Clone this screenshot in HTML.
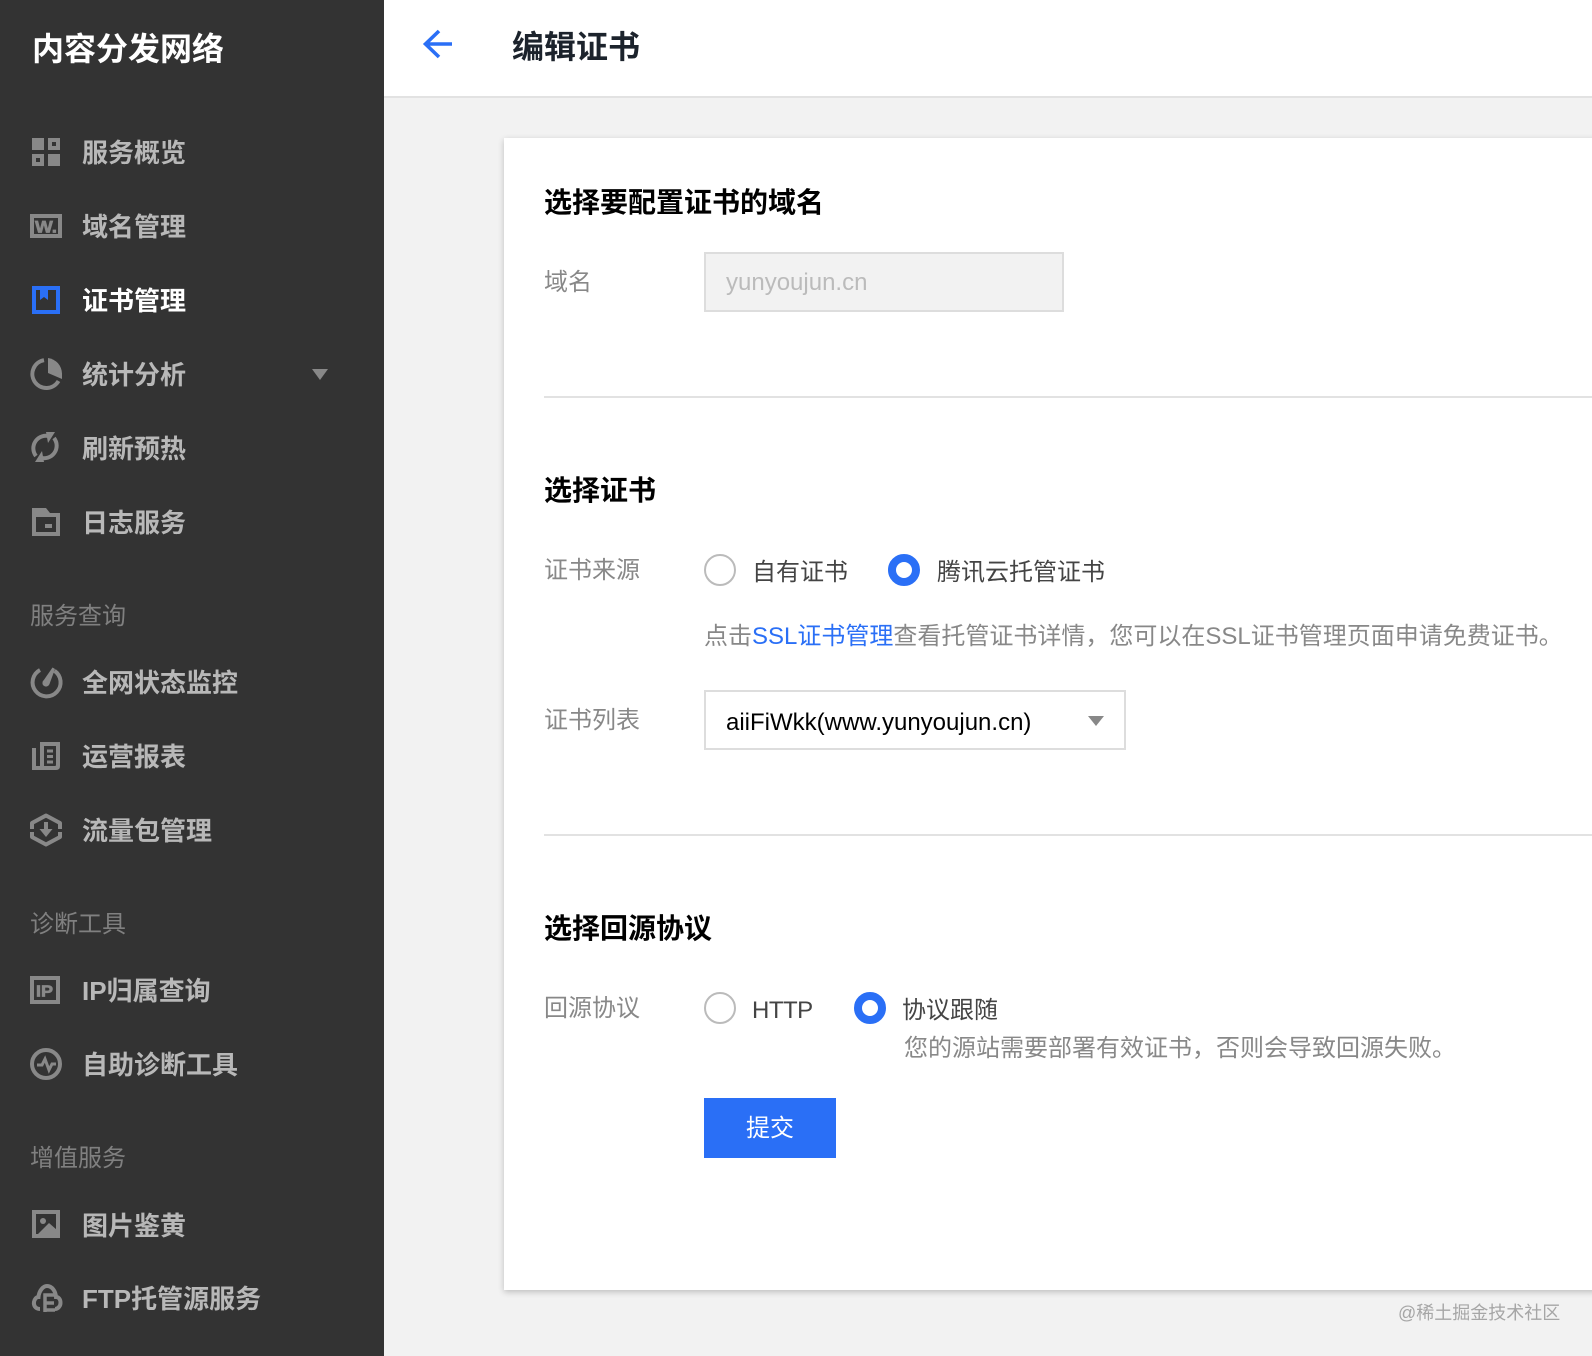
<!DOCTYPE html>
<html lang="zh-CN">
<head>
<meta charset="utf-8">
<title>编辑证书</title>
<style>
html,body{margin:0;padding:0;width:1592px;height:1356px;overflow:hidden;background:#f2f2f2}
body{position:relative;font-family:"Liberation Sans","Noto Sans CJK SC",sans-serif}
.t{position:absolute;white-space:nowrap;line-height:40px;height:40px}
.side{position:absolute;left:0;top:0;width:384px;height:1356px;background:#333}
.head{position:absolute;left:384px;top:0;width:1208px;height:96px;background:#fff;border-bottom:2px solid #e2e2e2}
.card{position:absolute;left:504px;top:138px;width:1200px;height:1152px;background:#fff;box-shadow:0 2px 6px rgba(0,0,0,.22)}
.m{left:82px;font-size:26px;font-weight:700;color:#b8b8b8}
.g{left:30px;font-size:24px;color:#808080}
.h2{left:544px;font-size:28px;font-weight:700;color:#000}
.l{left:544px;font-size:24px;color:#888}
.v{font-size:24px;color:#444}
.hint{font-size:24px;color:#888}
.div{position:absolute;left:544px;width:1048px;height:2px;background:#e2e2e2}
.radio{position:absolute;width:32px;height:32px;border-radius:50%;box-sizing:border-box;background:#fff;border:2px solid #bbb}
.radio.on{border:8px solid #2a6ff6}
.box{position:absolute;box-sizing:border-box;border:2px solid #ddd}
svg{position:absolute;left:0;top:0}
</style>
</head>
<body>
<div class="side"></div>
<div class="head"></div>
<div class="card"></div>

<div class="t" style="left:32px;top:29px;font-size:32px;font-weight:700;color:#fff">内容分发网络</div>
<div class="t m" style="top:133px">服务概览</div>
<div class="t m" style="top:207px">域名管理</div>
<div class="t m" style="top:281px;color:#fff">证书管理</div>
<div class="t m" style="top:355px">统计分析</div>
<div class="t m" style="top:429px">刷新预热</div>
<div class="t m" style="top:503px">日志服务</div>
<div class="t g" style="top:597px">服务查询</div>
<div class="t m" style="top:663px">全网状态监控</div>
<div class="t m" style="top:737px">运营报表</div>
<div class="t m" style="top:811px">流量包管理</div>
<div class="t g" style="top:905px">诊断工具</div>
<div class="t m" style="top:971px">IP归属查询</div>
<div class="t m" style="top:1045px">自助诊断工具</div>
<div class="t g" style="top:1139px">增值服务</div>
<div class="t m" style="top:1206px">图片鉴黄</div>
<div class="t m" style="top:1279px">FTP托管源服务</div>

<div class="t" style="left:512px;top:27px;font-size:32px;font-weight:700;color:#1c232c">编辑证书</div>

<div class="t h2" style="top:183px">选择要配置证书的域名</div>
<div class="t l" style="top:263px">域名</div>
<div class="box" style="left:704px;top:252px;width:360px;height:60px;background:#f2f2f2"></div>
<div class="t" style="left:726px;top:263px;font-size:24px;color:#bbb">yunyoujun.cn</div>
<div class="div" style="top:396px"></div>

<div class="t h2" style="top:471px">选择证书</div>
<div class="t l" style="top:551px">证书来源</div>
<div class="radio" style="left:704px;top:554px"></div>
<div class="t v" style="left:752px;top:553px">自有证书</div>
<div class="radio on" style="left:888px;top:554px"></div>
<div class="t v" style="left:937px;top:553px">腾讯云托管证书</div>
<div class="t hint" style="left:704px;top:617px">点击<span style="color:#2a6ff6">SSL证书管理</span>查看托管证书详情，您可以在SSL证书管理页面申请免费证书。</div>
<div class="t l" style="top:701px">证书列表</div>
<div class="box" style="left:704px;top:690px;width:422px;height:60px;background:#fff"></div>
<div class="t" style="left:726px;top:703px;font-size:24px;color:#000">aiiFiWkk(www.yunyoujun.cn)</div>
<div class="div" style="top:834px"></div>

<div class="t h2" style="top:909px">选择回源协议</div>
<div class="t l" style="top:989px">回源协议</div>
<div class="radio" style="left:704px;top:992px"></div>
<div class="t v" style="left:752px;top:991px;letter-spacing:-.5px">HTTP</div>
<div class="radio on" style="left:854px;top:992px"></div>
<div class="t v" style="left:902px;top:991px">协议跟随</div>
<div class="t hint" style="left:904px;top:1029px">您的源站需要部署有效证书，否则会导致回源失败。</div>
<div style="position:absolute;left:704px;top:1098px;width:132px;height:60px;background:#2a6ff6;color:#fff;font-size:24px;line-height:62px;text-align:center">提交</div>

<div class="t" style="left:1398px;top:1293px;font-size:18px;color:#a6a6a6">@稀土掘金技术社区</div>

<svg width="1592" height="1356" viewBox="0 0 1592 1356" xmlns="http://www.w3.org/2000/svg">
  <path d="M452 44H427M439 31L425.5 44L439 57" fill="none" stroke="#2a6ff6" stroke-width="3.6"/>
  <g fill="#888">
    <!-- grid -->
    <rect x="32" y="138" width="12" height="12"/>
    <rect x="48" y="154" width="12" height="12"/>
    <path fill-rule="evenodd" d="M48 138H60V150H48ZM52 142V146H56V142Z"/>
    <path fill-rule="evenodd" d="M32 154H44V166H32ZM36 158V162H40V158Z"/>
    <!-- W -->
    <path fill-rule="evenodd" d="M30 214H62V238H30ZM34 218V234H58V218Z"/>
    <text x="35" y="232.500" font-family="Liberation Sans" font-weight="700" font-size="17" stroke="#888" stroke-width=".7" textLength="22" lengthAdjust="spacingAndGlyphs">W.</text>
    <!-- pie wedge -->
    <path d="M48 358A16 16 0 0 1 62 373.500L62 379L48 373Z"/>
    <!-- refresh heads -->
    <path d="M46 432H55L48 443Z"/>
    <path d="M44 462H35L42 451Z"/>
    <!-- folder -->
    <path fill-rule="evenodd" d="M32 508H46L50 513H60V536H32ZM36 517V532H56V517Z"/>
    <rect x="45" y="524" width="7" height="4"/>
    <!-- gauge -->
    <circle cx="46" cy="683" r="3.600"/>
    <path d="M42.500 682L52.500 667.500L55 669L49.500 684Z"/>
    <!-- report -->
    <path d="M32 748H36V766H40V742H60V766Q60 770 56 770H32ZM44 746V766H55Q56 766 56 765V746Z" fill-rule="evenodd"/>
    <rect x="47" y="749.500" width="6" height="3"/>
    <rect x="47" y="755" width="6" height="3"/>
    <rect x="47" y="760.500" width="6" height="3"/>
    <!-- hex arrow -->
    <path d="M44 822H48V829H52.500L46 837L39.500 829H44Z"/>
    <!-- IP -->
    <path fill-rule="evenodd" d="M30 976H60V1004H30ZM34 980V1000H56V980Z"/>
    <text x="36" y="996.500" font-family="Liberation Sans" font-weight="700" font-size="16" stroke="#888" stroke-width=".7" textLength="17" lengthAdjust="spacingAndGlyphs">IP</text>
    <!-- image -->
    <path fill-rule="evenodd" d="M32 1210H60V1238H32ZM36 1214V1234H56V1214Z"/>
    <circle cx="43" cy="1221" r="3"/>
    <path d="M36 1236L49 1223L57 1230V1236Z"/>
    <!-- triangles -->
    <path d="M312 369H328L320 380Z"/>
    <path d="M1088 716H1104L1096 726Z"/>
  </g>
  <g fill="none" stroke="#888" stroke-width="4">
    <path d="M44 360.200A14 14 0 1 0 58.500 381"/>
    <path d="M50 436.500A12.500 12.500 0 0 0 36 456"/>
    <path d="M40 457.500A12.500 12.500 0 0 0 54 438"/>
    <path d="M40 670A14 14 0 1 0 54.500 670.800"/>
    <path d="M32 829V823L46 815.500L60 823V829M60 832V837L46 844.500L32 837V832" stroke-linejoin="round"/>
    <circle cx="46" cy="1064" r="14"/>
    <path d="M40 1309C35 1309 33.500 1305 34 1302C34.500 1299 36.500 1297 38.500 1297C39 1291 43 1286 47 1286C52 1286 55.500 1291 56 1297C58.500 1297 60.500 1299 60.500 1303C60.500 1306 58 1309 55 1309"/>
    <path d="M45 1312V1295H55M45 1303H54M45 1310H55" stroke-width="3.500"/>
  </g>
  <path d="M37 1065H42L45 1059L49 1070L52 1064H56" fill="none" stroke="#888" stroke-width="3"/>
  <path d="M34 288H58V312H34Z" fill="none" stroke="#2a6ff6" stroke-width="4"/>
  <path d="M40 290H48V300L44 297L40 300Z" fill="#2a6ff6"/>
</svg>
</body>
</html>
